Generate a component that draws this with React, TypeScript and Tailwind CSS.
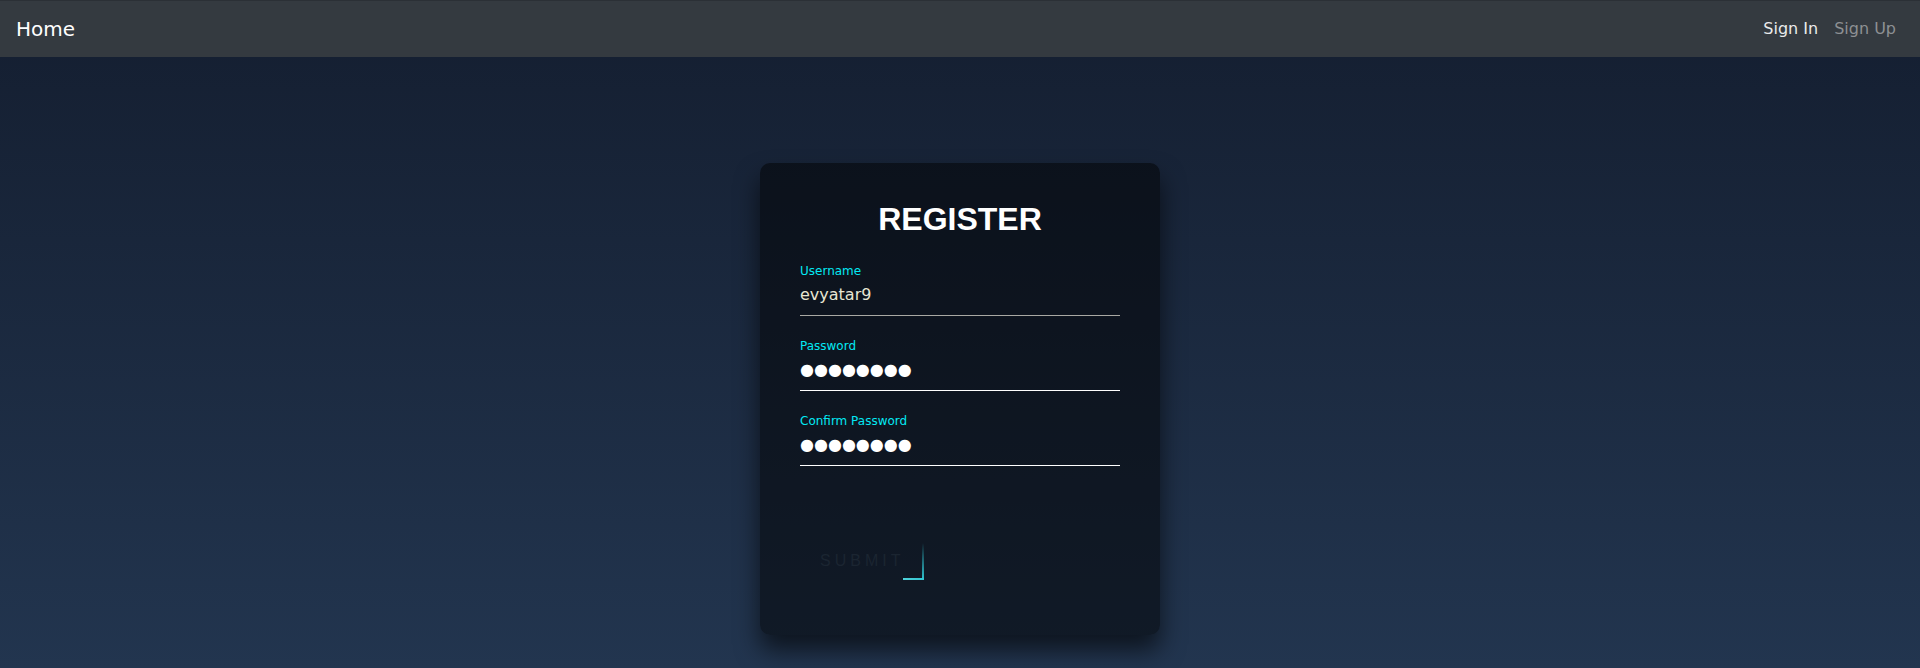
import React from 'react';

const fields = [
  { label: 'Username', value: 'evyatar9', line: 'border-[#a9a9a4]', color: 'text-[#e8e6d3]' },
  { label: 'Password', value: '●●●●●●●●', line: 'border-white', color: 'text-white' },
  { label: 'Confirm Password', value: '●●●●●●●●', line: 'border-white', color: 'text-white' },
];

const App = () => {
  return (
    <div className="min-h-screen bg-gradient-to-b from-[#141e30] to-[#22354f] font-['DejaVu_Sans',sans-serif]">
      {/* Navbar */}
      <nav className="h-[57px] bg-[#343a40] border-t border-[#2b3036] flex items-center justify-between px-4">
        <span className="text-[20px] text-white">Home</span>
        <div className="flex items-center">
          <span className="px-2 text-[16px] text-[#e9eaeb]">Sign In</span>
          <span className="px-2 text-[16px] text-[#8d9093]">Sign Up</span>
        </div>
      </nav>

      {/* Register box */}
      <div className="mx-auto mt-[106px] w-[400px] rounded-[10px] bg-black/50 shadow-[0_15px_25px_rgba(0,0,0,0.6)] px-10 pt-[38px] pb-[55px] flex flex-col">
        <h2 className="text-center text-[32px] leading-[37px] font-bold text-white font-['Liberation_Sans',Arial,sans-serif] mb-[26px]">
          REGISTER
        </h2>

        {fields.map((f, i) => (
          <div key={f.label} className={`flex flex-col ${i < fields.length - 1 ? 'mb-[23px]' : ''}`}>
            <label className="text-[12px] leading-[14px] text-[#03e9f4]">{f.label}</label>
            <div className={`mt-[7px] h-[31px] pb-[11px] leading-[19px] text-[16px] border-b ${f.line} ${f.color} whitespace-nowrap`}>
              {f.value}
            </div>
          </div>
        ))}

        <button className="relative self-start mt-[76px] px-5 py-2.5 text-[16px] leading-[18px] tracking-[4px] text-[#1b2531] bg-transparent font-['Liberation_Sans',Arial,sans-serif]">
          SUBMIT
          <span className="absolute right-0 bottom-0 w-[2px] h-[37px] bg-gradient-to-b from-transparent to-[#2fc6d2]"></span>
          <span className="absolute right-0 bottom-0 h-[2px] w-[21px] bg-gradient-to-l from-[#2fc6d2] to-[#4fd2da]"></span>
        </button>
      </div>
    </div>
  );
};

export default App;
